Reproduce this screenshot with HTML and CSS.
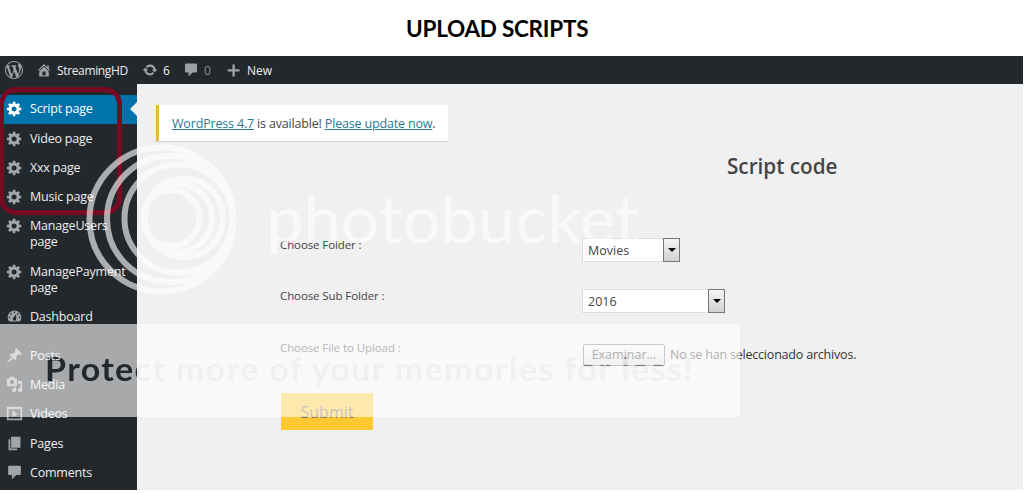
FILE: index.html
```html
<!DOCTYPE html>
<html lang="en">

<head>
    <meta charset="UTF-8">
    <meta name="viewport" content="width=device-width, initial-scale=1.0">
    <title>Upload Scripts</title>
    <link rel="stylesheet" href="styles.css">
</head>

<body>
    <!-- icons -->
    <svg class="sprite" width="0" height="0">
        <symbol id="wp" viewBox="0 0 20 20"><path d="M20 10c0-5.51-4.49-10-10-10C4.48 0 0 4.49 0 10c0 5.52 4.48 10 10 10 5.51 0 10-4.48 10-10zM7.78 15.37L4.37 6.22c.55-.02 1.17-.08 1.17-.08.5-.06.44-1.13-.06-1.11 0 0-1.45.11-2.37.11-.18 0-.37 0-.58-.01C4.12 2.69 6.87 1.11 10 1.11c2.33 0 4.45.87 6.05 2.34-.68-.11-1.65.39-1.65 1.58 0 .74.45 1.36.9 2.1.35.61.55 1.36.55 2.46 0 1.49-1.4 5-1.4 5l-3.03-8.37c.54-.02.82-.17.82-.17.5-.05.44-1.25-.06-1.22 0 0-1.44.12-2.38.12-.87 0-2.33-.12-2.33-.12-.5-.03-.56 1.2-.06 1.22l.92.08 1.26 3.41zM17.41 10c.24-.64.74-1.87.43-4.25.7 1.29 1.05 2.71 1.05 4.25 0 3.29-1.73 6.24-4.4 7.78.97-2.59 1.94-5.2 2.92-7.78zM6.1 18.09C3.12 16.65 1.11 13.53 1.11 10c0-1.3.23-2.48.72-3.59C3.25 10.3 4.67 14.2 6.1 18.09zm4.03-6.63l2.58 6.98c-.86.29-1.76.45-2.71.45-.79 0-1.57-.11-2.29-.33.81-2.38 1.62-4.74 2.42-7.1z"/></symbol>
        <symbol id="home" viewBox="0 0 20 20"><path d="M16 8.5l1.53 1.53-1.06 1.06L10 4.6l-6.47 6.49-1.06-1.06L10 2.5l4 4v-2h2v4zm-6-2.46l6 5.99V18H4v-5.97zM12 17v-5H8v5h4z"/></symbol>
        <symbol id="update" viewBox="0 0 20 20"><path d="M10.2 3.28c3.53 0 6.43 2.61 6.92 6h2.08l-3.5 4-3.5-4h2.32c-.45-1.97-2.21-3.45-4.32-3.45-1.45 0-2.73.71-3.54 1.78L4.95 5.66C6.23 4.2 8.11 3.28 10.2 3.28zm-.4 13.44c-3.52 0-6.43-2.61-6.92-6H.8l3.5-4c1.17 1.33 2.33 2.67 3.5 4H5.48c.45 1.97 2.21 3.45 4.32 3.45 1.45 0 2.73-.71 3.54-1.78l1.71 1.95c-1.28 1.46-3.15 2.38-5.25 2.38z"/></symbol>
        <symbol id="comment" viewBox="0 0 20 20"><path d="M4 2h12c.8 0 1.5.7 1.5 1.5v8c0 .8-.7 1.5-1.5 1.5h-4l-5 5v-5H4c-.8 0-1.5-.7-1.5-1.5v-8C2.5 2.7 3.2 2 4 2z"/></symbol>
        <symbol id="plus" viewBox="0 0 20 20"><path d="M17 9v3h-6v6H8v-6H2V9h6V3h3v6h6z"/></symbol>
        <symbol id="gear" viewBox="0 0 20 20"><path d="M18 12h-2.18c-.17.7-.44 1.35-.81 1.93l1.54 1.54-2.1 2.1-1.54-1.54c-.58.36-1.23.63-1.91.79V19H8v-2.18c-.68-.16-1.33-.43-1.91-.79l-1.54 1.54-2.12-2.12 1.54-1.54c-.36-.58-.63-1.23-.79-1.91H1V9.03h2.17c.16-.7.44-1.35.8-1.94L2.43 5.55l2.1-2.1 1.54 1.54c.58-.37 1.24-.64 1.93-.81V2h3v2.18c.68.16 1.33.43 1.91.79l1.54-1.54 2.12 2.12-1.54 1.54c.36.59.64 1.24.8 1.94H18V12zm-8.5 1.5c1.66 0 3-1.34 3-3s-1.34-3-3-3-3 1.34-3 3 1.34 3 3 3z"/></symbol>
        <symbol id="dashboard" viewBox="0 0 20 20"><path d="M3.76 16h12.48c1.1-1.37 1.76-3.11 1.76-5 0-4.42-3.58-8-8-8s-8 3.58-8 8c0 1.89.66 3.63 1.76 5zM10 4c.55 0 1 .45 1 1s-.45 1-1 1-1-.45-1-1 .45-1 1-1zM6 6c.55 0 1 .45 1 1s-.45 1-1 1-1-.45-1-1 .45-1 1-1zm8 0c.55 0 1 .45 1 1s-.45 1-1 1-1-.45-1-1 .45-1 1-1zm-5.37 5.55L12 7v6c0 1.1-.9 2-2 2s-2-.9-2-2c0-.57.24-1.08.63-1.45zM4 10c.55 0 1 .45 1 1s-.45 1-1 1-1-.45-1-1 .45-1 1-1zm12 0c.55 0 1 .45 1 1s-.45 1-1 1-1-.45-1-1 .45-1 1-1z"/></symbol>
        <symbol id="pin" viewBox="0 0 20 20"><path d="M10.44 3.02l1.82-1.82 6.36 6.35-1.83 1.82c-1.05-.68-2.48-.57-3.41.36l-.75.75c-.92.93-1.04 2.35-.35 3.41l-1.83 1.82-2.41-2.41-2.8 2.79c-.42.42-3.38 2.71-3.8 2.29s1.86-3.39 2.28-3.81l2.79-2.79L4.1 9.36l1.83-1.82c1.05.69 2.48.57 3.4-.36l.75-.75c.93-.92 1.05-2.35.36-3.41z"/></symbol>
        <symbol id="media" viewBox="0 0 20 20"><path d="M13 11V4c0-.55-.45-1-1-1h-1.67L9 1H5L3.67 3H2c-.55 0-1 .45-1 1v7c0 .55.45 1 1 1h10c.55 0 1-.45 1-1zM7 4.5c1.38 0 2.5 1.12 2.5 2.5S8.38 9.5 7 9.5 4.5 8.38 4.5 7 5.62 4.5 7 4.5zM14 6h5v10.5c0 1.38-1.12 2.5-2.5 2.5S14 17.88 14 16.5s1.12-2.5 2.5-2.5c.17 0 .34.02.5.05V9h-3V6zm-4 8.05V13h2v3.5c0 1.38-1.12 2.5-2.5 2.5S7 17.88 7 16.5 8.12 14 9.5 14c.17 0 .34.02.5.05z"/></symbol>
        <symbol id="video" viewBox="0 0 20 20"><path fill-rule="evenodd" d="M1 2h18v16H1zM3 5v11h14V5zM7.5 6.5l6.5 4-6.5 4z"/></symbol>
        <symbol id="pages" viewBox="0 0 20 20"><path d="M6 15V2h11v13H6zm-1 1h8v2H3V5h2v11z"/></symbol>
    </svg>

    <h1 class="page-title">UPLOAD SCRIPTS</h1>

    <div class="screen">
        <!-- admin bar -->
        <div class="adminbar">
            <svg class="wp-logo"><use href="#wp"/></svg>
            <span class="bar-item site"><svg><use href="#home"/></svg>StreamingHD</span>
            <span class="bar-item updates"><svg><use href="#update"/></svg>6</span>
            <span class="bar-item comments"><svg><use href="#comment"/></svg>0</span>
            <span class="bar-item new"><svg><use href="#plus"/></svg>New</span>
        </div>

        <div class="main">
            <!-- side menu -->
            <ul class="menu">
                <li class="current"><svg><use href="#gear"/></svg><span>Script page</span></li>
                <li><svg><use href="#gear"/></svg><span>Video page</span></li>
                <li><svg><use href="#gear"/></svg><span>Xxx page</span></li>
                <li><svg><use href="#gear"/></svg><span>Music page</span></li>
                <li><svg><use href="#gear"/></svg><span>ManageUsers<br>page</span></li>
                <li><svg><use href="#gear"/></svg><span>ManagePayment<br>page</span></li>
                <li class="dash"><svg><use href="#dashboard"/></svg><span>Dashboard</span></li>
                <li><svg><use href="#pin"/></svg><span>Posts</span></li>
                <li><svg><use href="#media"/></svg><span>Media</span></li>
                <li><svg><use href="#video"/></svg><span>Videos</span></li>
                <li><svg><use href="#pages"/></svg><span>Pages</span></li>
                <li><svg><use href="#comment"/></svg><span>Comments</span></li>
            </ul>

            <!-- content -->
            <div class="content">
                <div class="notice"><a href="#">WordPress 4.7</a> is available! <a href="#">Please update now</a>.</div>
                <h2>Script code</h2>
                <form class="upload-form">
                    <label>Choose Folder :</label>
                    <div class="select folder"><span>Movies</span><i></i></div>
                    <label>Choose Sub Folder :</label>
                    <div class="select subfolder"><span>2016</span><i></i></div>
                    <label>Choose File to Upload :</label>
                    <div class="file"><button type="button">Examinar...</button><span>No se han seleccionado archivos.</span></div>
                    <button type="button" class="submit">Submit</button>
                </form>
            </div>
        </div>
    </div>

    <div class="highlight-box"></div>

    <!-- watermark -->
    <svg class="watermark" width="1024" height="493" viewBox="0 0 1024 493">
        <mask id="cutout" maskUnits="userSpaceOnUse" x="0" y="324" width="740" height="93">
            <rect x="0" y="324" width="740" height="93" fill="#fff"/>
            <text class="slogan" x="45" y="381" textLength="649" lengthAdjust="spacingAndGlyphs">Protect more of your memories for less!</text>
        </mask>
        <g class="rings">
            <circle cx="161.5" cy="219.5" r="72"/>
            <circle cx="170" cy="219" r="63"/>
            <circle cx="178.5" cy="218.5" r="54"/>
            <circle cx="184" cy="218" r="39"/>
            <circle cx="178" cy="218" r="34"/>
            <circle cx="171.5" cy="218" r="28"/>
        </g>
        <text class="brand" x="266" y="243" textLength="373" lengthAdjust="spacingAndGlyphs">photobucket</text>
        <rect class="band" x="0" y="324" width="740" height="93" mask="url(#cutout)"/>
    </svg>
</body>

</html>
```
FILE: styles.css
```css
* {
    box-sizing: border-box;
}

body {
    position: relative;
    width: 1024px;
    height: 493px;
    margin: 0;
    overflow: hidden;
    background-color: #fff;
    font-family: "Open Sans", sans-serif;
    font-size: 13px;
    color: #444;
}

.sprite {
    position: absolute;
}

.page-title {
    height: 56px;
    margin: 0;
    padding-left: 406px;
    font-family: Lato, sans-serif;
    font-size: 22.5px;
    font-weight: 700;
    line-height: 57px;
    letter-spacing: -0.25px;
    color: #000;
}

.screen {
    width: 1023px;
    height: 434px;
    background-color: #f0f0f0;
}

/* admin bar */
.adminbar {
    display: flex;
    align-items: center;
    height: 28px;
    padding-left: 5px;
    background-color: #23282d;
    font-size: 12px;
    color: #eee;
}

.adminbar svg {
    width: 16px;
    height: 16px;
    fill: #9ca1a6;
}

.adminbar .wp-logo {
    width: 18px;
    height: 18px;
    margin-right: 13px;
}

.bar-item {
    display: flex;
    align-items: center;
    gap: 5px;
}

.site {
    width: 106px;
    letter-spacing: -0.35px;
}

.updates {
    width: 41px;
}

.comments {
    width: 43px;
    color: #8a8f94;
}

/* side menu */
.main {
    display: flex;
    height: 406px;
}

.menu {
    width: 137px;
    margin: 0;
    padding: 10.7px 0 0;
    list-style: none;
    background-color: #23282d;
    font-size: 12.5px;
    letter-spacing: -0.2px;
    color: #eee;
}

.menu li {
    display: flex;
    gap: 7px;
    position: relative;
    padding: 6.65px 0 6.65px 6px;
    line-height: 16px;
    white-space: nowrap;
}

.menu svg {
    flex: none;
    width: 17px;
    height: 17px;
    margin-top: -1px;
    fill: #a0a5aa;
}

.menu .current {
    background-color: #0073aa;
    color: #fff;
}

.menu .current svg {
    fill: #fff;
}

.menu .current::after {
    content: "";
    position: absolute;
    right: 0;
    top: 7px;
    border: 7px solid transparent;
    border-left: 0;
    border-right-color: #f0f0f0;
}

.menu .dash {
    margin-bottom: 9.5px;
}

/* content */
.content {
    flex: 1;
    padding: 21px 0 0 19px;
}

.notice {
    width: 292px;
    height: 36px;
    padding-left: 13px;
    border-left: 3px solid #e9b93c;
    background-color: #fff;
    box-shadow: 0 1px 1px rgba(0, 0, 0, .1);
    font-size: 12.5px;
    line-height: 37px;
    letter-spacing: -0.17px;
    white-space: nowrap;
}

.notice a {
    color: #2b7790;
}

.content h2 {
    margin: 11px 0 0 571px;
    font-size: 20.7px;
    font-weight: 600;
    line-height: 28px;
    color: #444;
}

.upload-form {
    display: grid;
    grid-template-columns: 302px 1fr;
    grid-template-rows: 51px 52px 52px 37px;
    margin: 58px 0 0 124px;
}

.upload-form label {
    font-size: 11.5px;
    line-height: 14px;
    letter-spacing: -0.1px;
}

.select {
    display: flex;
    justify-content: space-between;
    height: 24px;
    border: 1px solid #ddd;
    background-color: #fff;
    font-size: 12.5px;
    line-height: 23px;
}

.select span {
    padding-left: 5px;
}

.select i {
    display: flex;
    align-items: center;
    justify-content: center;
    width: 17px;
    height: 24px;
    margin: -1px -1px 0 0;
    border: 1px solid #777;
    background: linear-gradient(#f4f4f4, #d2d2d2);
}

.select i::after {
    content: "";
    border: 4px solid transparent;
    border-top-color: #000;
    border-bottom: 0;
}

.folder {
    width: 98px;
}

.subfolder {
    width: 143px;
}

.file {
    display: flex;
    gap: 5px;
    padding-left: 1px;
    margin-top: 3px;
    height: 22px;
    font-size: 12.5px;
    line-height: 22px;
    letter-spacing: -0.2px;
    color: #333;
}

.file button {
    width: 82px;
    padding: 0;
    border: 1px solid #777;
    border-radius: 2px;
    background: linear-gradient(#f6f6f6, #ddd);
    font: inherit;
    line-height: 18px;
    color: #333;
}

.submit {
    width: 92px;
    margin-left: 1px;
    padding: 0;
    border: 0;
    background-color: #fdc831;
    font-family: inherit;
    font-size: 16px;
    color: #77695a;
}

/* red marker round the first menu entries */
.highlight-box {
    position: absolute;
    left: -1px;
    top: 87px;
    width: 123px;
    height: 128px;
    border: 5px solid #760b22;
    border-radius: 17px;
}

/* watermark */
.watermark {
    position: absolute;
    left: 0;
    top: 0;
    pointer-events: none;
}

.rings {
    fill: none;
    stroke: #fff;
    stroke-width: 6;
    opacity: .62;
}

.brand {
    font-family: Lato, sans-serif;
    font-size: 65px;
    fill: #fff;
    opacity: .62;
}

.band {
    fill: #fff;
    opacity: .6;
}

.slogan {
    font-family: Lato, sans-serif;
    font-size: 32px;
    font-weight: 700;
    letter-spacing: 1.3px;
    fill: #000;
}
```
